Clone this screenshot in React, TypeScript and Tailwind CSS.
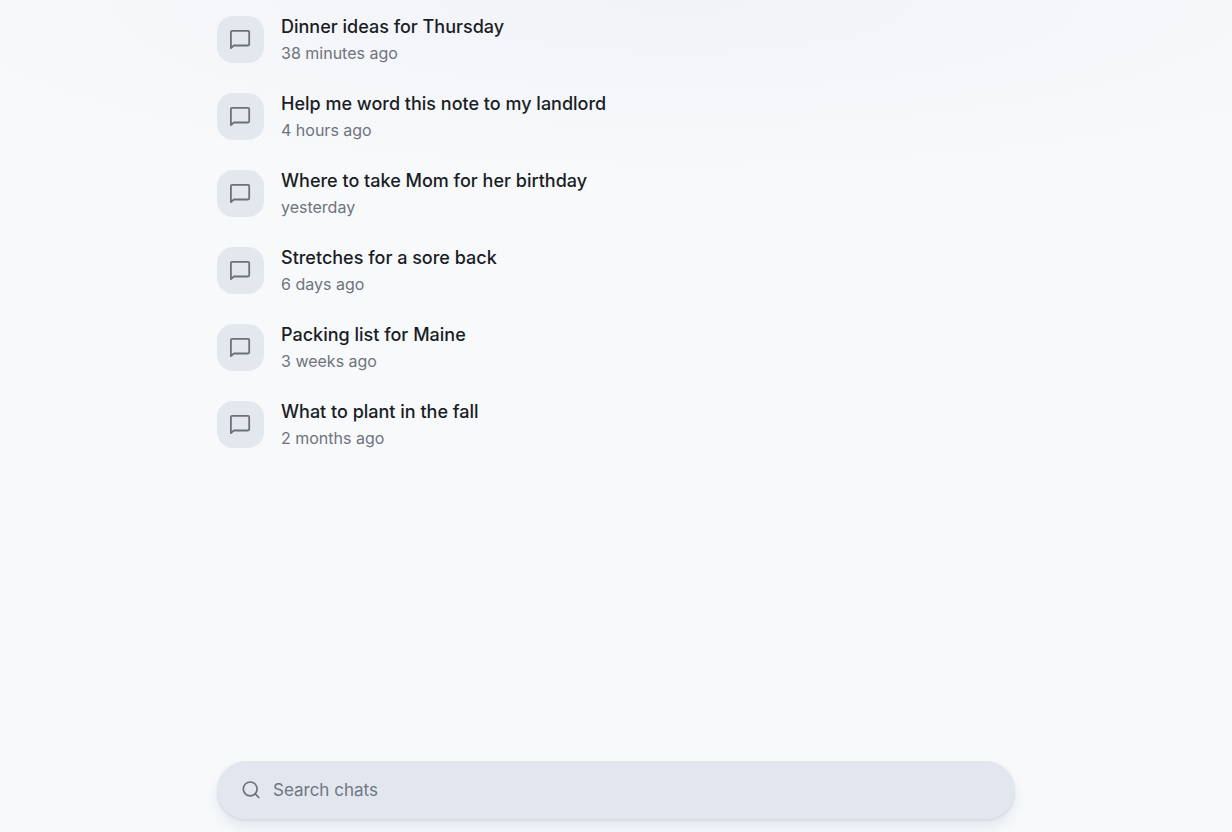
interface Chat {
    title: string;
    time: string;
}

const chats: Chat[] = [
    { title: "Dinner ideas for Thursday", time: "38 minutes ago" },
    { title: "Help me word this note to my landlord", time: "4 hours ago" },
    { title: "Where to take Mom for her birthday", time: "yesterday" },
    { title: "Stretches for a sore back", time: "6 days ago" },
    { title: "Packing list for Maine", time: "3 weeks ago" },
    { title: "What to plant in the fall", time: "2 months ago" },
];

function ChatIcon() {
    return (
        <svg
            viewBox="0 0 24 24"
            className="size-6"
            fill="none"
            stroke="currentColor"
            strokeWidth="1.8"
            strokeLinejoin="round"
            aria-hidden="true"
        >
            <path d="M3.1 3.9H19Q20.2 3.9 20.2 5.1V17.3Q20.2 18.5 19 18.5H4.9L1.9 21.1V5.1Q1.9 3.9 3.1 3.9Z" />
        </svg>
    );
}

function SearchIcon() {
    return (
        <svg
            viewBox="0 0 20 20"
            className="size-5 shrink-0"
            fill="none"
            stroke="currentColor"
            strokeWidth="1.7"
            strokeLinecap="round"
            aria-hidden="true"
        >
            <circle cx="9.2" cy="8.9" r="6.9" />
            <path d="M14.2 13.9L17.8 17.5" />
        </svg>
    );
}

function ChatRow({ title, time }: Chat) {
    return (
        <li>
            <a href="#" className="flex items-center gap-[17px]">
                <span className="flex size-[47px] shrink-0 items-center justify-center rounded-2xl bg-[#e3e8ee] text-[#6b707b]">
                    <ChatIcon />
                </span>
                <span className="flex min-w-0 flex-col gap-1">
                    <span className="truncate text-lg leading-6 font-medium text-[#1a1d26]">{title}</span>
                    <span className="text-base leading-5 text-[#6e737d]">{time}</span>
                </span>
            </a>
        </li>
    );
}

export default function App() {
    return (
        <div className="min-h-screen bg-[#f7f9fa] bg-[radial-gradient(ellipse_65%_180px_at_55%_0px,#f1f3f9,#f7f9fa)] font-['Inter','Liberation_Sans',sans-serif]">
            <main className="mx-auto flex min-h-screen w-full max-w-[798px] flex-col justify-between pt-[15px] pb-[13px]">
                <ul className="flex flex-col gap-[29px]">
                    {chats.map((chat) => (
                        <ChatRow key={chat.title} title={chat.title} time={chat.time} />
                    ))}
                </ul>
                <label className="flex h-[58px] items-center gap-3 rounded-full bg-[#e2e7ef] px-6 text-[#6b707b] shadow-[0_2px_2px_#d9dce0,0_8px_12px_#e3e8f1]">
                    <SearchIcon />
                    <input
                        type="search"
                        aria-label="Search chats"
                        placeholder="Search chats"
                        className="min-w-0 flex-1 bg-transparent text-[17px] leading-6 outline-none placeholder:text-[#70757f]"
                    />
                </label>
            </main>
        </div>
    );
}
